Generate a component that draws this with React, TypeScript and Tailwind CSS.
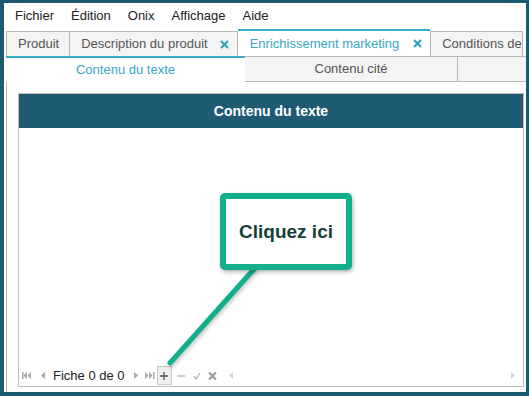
import React from 'react';

const font = { fontFamily: '"Liberation Sans", Arial, sans-serif' };

const Close = ({ ml = 12 }: { ml?: number }) => (
  <svg width="9" height="9" viewBox="0 0 9 9" style={{ marginLeft: ml }}>
    <path d="M1 1 8 8M8 1 1 8" stroke="#2d9fc2" strokeWidth="2" />
  </svg>
);

const First = () => (
  <svg width="9" height="7" viewBox="0 0 9 7">
    <rect x="0" y="0" width="1.5" height="7" fill="#a8a8a8" />
    <path d="M5 0v7L1.5 3.5z M9 0v7L5.5 3.5z" fill="#a8a8a8" />
  </svg>
);
const Last = () => (
  <svg width="10" height="7" viewBox="0 0 10 7">
    <path d="M0 0v7l3.5-3.5z M4 0v7l3.5-3.5z" fill="#a8a8a8" />
    <rect x="8" y="0" width="1.5" height="7" fill="#a8a8a8" />
  </svg>
);
const Prev = ({ c = '#a8a8a8' }: { c?: string }) => (
  <svg width="4" height="7" viewBox="0 0 4 7">
    <path d="M4 0v7L0 3.5z" fill={c} />
  </svg>
);
const Next = ({ c = '#a8a8a8' }: { c?: string }) => (
  <svg width="4" height="7" viewBox="0 0 4 7">
    <path d="M0 0v7l4-3.5z" fill={c} />
  </svg>
);

export default function App() {
  return (
    <div className="w-[529px] h-[396px] bg-[#1f5a73] pt-[3px] pl-[4px] pr-[3px] pb-[4px]" style={font}>
      <div className="relative w-full h-full bg-white overflow-hidden flex flex-col">
        {/* menu */}
        <div className="h-[26px] flex items-center pl-[11px] gap-[17px] text-[13px] text-[#222]">
          <span>Fichier</span>
          <span>Édition</span>
          <span>Onix</span>
          <span>Affichage</span>
          <span>Aide</span>
        </div>

        {/* tabs */}
        <div className="h-[27px] flex items-end pl-[2px] text-[13px] whitespace-nowrap">
          <div className="h-[25px] pl-[11px] pr-[10px] flex items-center bg-[#f4f4f4] border border-b-0 border-[#b8b8b8] text-[#555]">Produit</div>
          <div className="h-[25px] pl-[11px] pr-[8px] flex items-center bg-[#f4f4f4] border border-l-0 border-b-0 border-[#b8b8b8] text-[#555]">
            Description du produit
            <Close />
          </div>
          <div className="h-[27px] pl-[12px] pr-[8px] flex items-center bg-white border-t-2 border-[#37aec6] text-[#37a8c2]">
            Enrichissement marketing
            <Close ml={14} />
          </div>
          <div className="h-[25px] pl-[11px] flex items-center bg-[#f4f4f4] border border-b-0 border-[#b8b8b8] text-[#555]">Conditions de</div>
        </div>

        {/* sub area */}
        <div className="flex-1 ml-[2px] border-l border-[#b8b8b8] flex flex-col">
          <div className="h-[26px] flex text-[13px] whitespace-nowrap">
            <div className="w-[239px] shrink-0 flex items-center justify-center border-t-2 border-[#37aec6] text-[#37a8c2] bg-white -ml-px">Contenu du texte</div>
            <div className="w-[212px] shrink-0 flex items-center justify-center bg-[#f4f4f4] border-t border-b border-[#b8b8b8] text-[#555]">Contenu cité</div>
            <div className="flex-1 bg-[#f4f4f4] border border-r-0 border-[#b8b8b8]" />
          </div>

          <div className="flex-1 pl-[11px] pr-[2px] pt-[11px] pb-[5px] flex">
            <div className="flex-1 border border-[#bdbdbd] flex flex-col">
              <div className="h-[34px] bg-[#1f5a73] flex items-center justify-center text-white font-bold text-[14px]">Contenu du texte</div>
              <div className="flex-1" />
              <div className="h-[19px] mb-[1px] flex items-center pl-[3px] pr-[8px] text-[13px] text-[#222]">
                <First />
                <span className="ml-[10px]"><Prev /></span>
                <span className="ml-[8px]">Fiche 0 de 0</span>
                <span className="ml-[9px]"><Next /></span>
                <span className="ml-[7px]"><Last /></span>
                <span className="ml-[2px] w-[15px] h-[19px] bg-[#eeeeee] border border-[#c8c8c8] flex items-center justify-center">
                  <svg width="8" height="8" viewBox="0 0 8 8"><path d="M4 0v8M0 4h8" stroke="#555" strokeWidth="1.3" /></svg>
                </span>
                <svg width="8" height="8" viewBox="0 0 8 8" className="ml-[5px]"><path d="M0 4h8" stroke="#b0b0b0" strokeWidth="1.3" /></svg>
                <svg width="8" height="8" viewBox="0 0 8 8" className="ml-[8px]"><path d="M1 4.5 3 7 7 1" stroke="#b0b0b0" strokeWidth="1.3" fill="none" /></svg>
                <svg width="9" height="8" viewBox="0 0 9 8" className="ml-[7px]"><path d="M1 0.5 8 7.5M8 0.5 1 7.5" stroke="#9a9a9a" strokeWidth="2" /></svg>
                <span className="ml-[12px]"><Prev c="#d6d6d6" /></span>
                <span className="ml-auto"><Next c="#d6d6d6" /></span>
              </div>
            </div>
          </div>
        </div>

        {/* callout overlay */}
        <svg className="absolute left-0 top-0 pointer-events-none" width="522" height="389" style={{ filter: 'drop-shadow(1px 2px 2px rgba(0,0,0,0.25))' }}>
          <line x1="251" y1="265" x2="166" y2="360" stroke="#13af8d" strokeWidth="5" strokeLinecap="round" />
        </svg>
        <div className="absolute left-[216px] top-[190px] w-[132px] h-[77px] bg-white border-[6px] border-[#13af8d] rounded-[5px] shadow-[1px_2px_4px_rgba(0,0,0,0.3)] flex items-center justify-center">
          <span className="font-bold text-[19px] text-[#173f35] mt-[2px]">Cliquez ici</span>
        </div>
      </div>
    </div>
  );
}
